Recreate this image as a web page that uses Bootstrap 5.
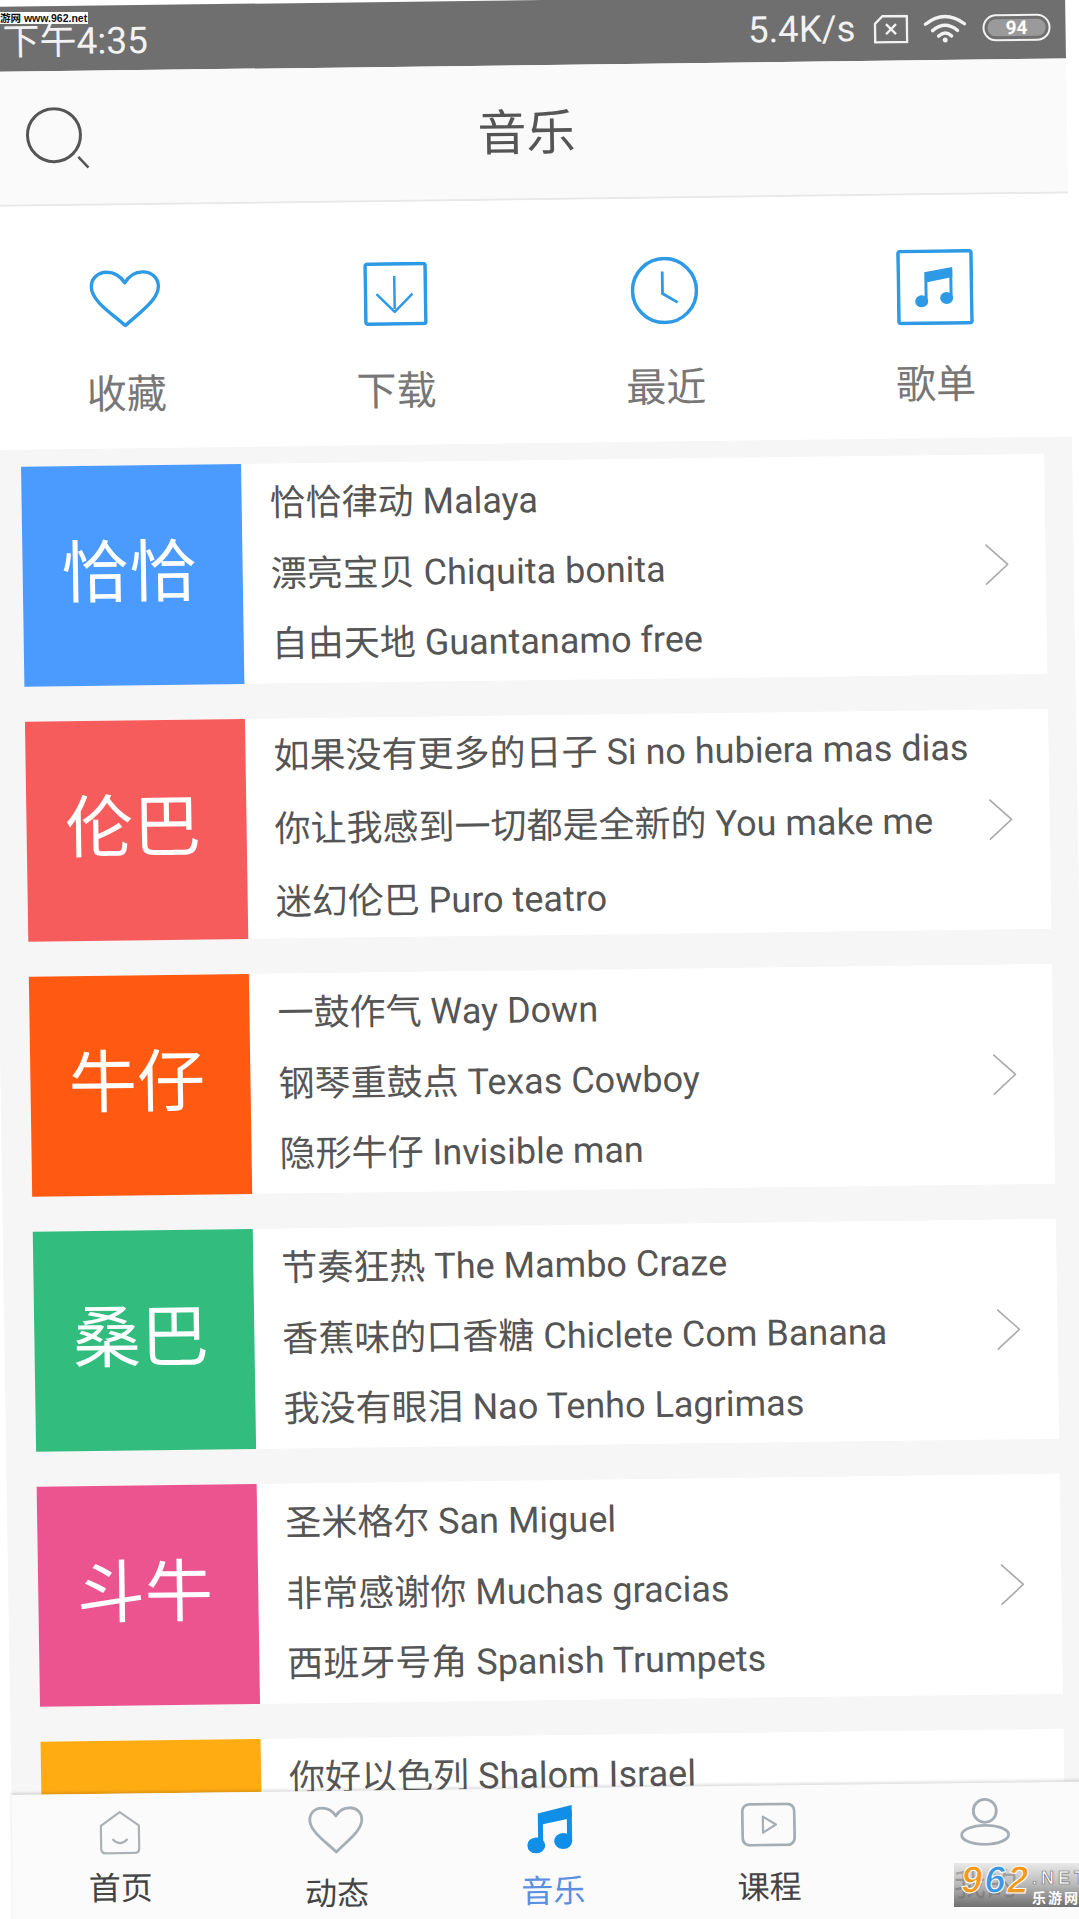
<!DOCTYPE html>
<html lang="zh">
<head>
  <meta charset="UTF-8" />
  <meta name="viewport" content="width=device-width, initial-scale=1.0"/>
  <title>音乐</title>
  <link href="https://cdn.jsdelivr.net/npm/bootstrap@5.3.3/dist/css/bootstrap.min.css" rel="stylesheet"/>
  <style>
    html, body { height: 100%; }
    body {
      margin: 0;
      background: #fff;
      overflow: hidden;
      font-family: Roboto, "Noto Sans CJK SC", sans-serif;
    }
    /* the photo is slightly crooked, so the whole phone screen is sheared */
    .screen {
      width: 1081px;
      height: 1930px;
      transform-origin: 0 0;
      transform: matrix(1, -0.0125, 0.0153, 1, -16, 7);
    }
    .status-bar {
      height: 65px;
      padding: 1px 15px 0 18px;
      background: #6f6f6f;
      color: #f2f2f2;
      flex: none;
    }
    .status-time { font-size: 37px; font-weight: 400; line-height: 1; padding-top: 4px; }
    .status-speed { font-size: 36.5px; font-weight: 400; line-height: 1; margin-right: 18px; }
    .status-sim { margin-right: 15px; }
    .status-wifi { margin-right: 16px; }
    .battery-pill {
      width: 68px;
      height: 27px;
      border: 2px solid #f2f2f2;
      border-radius: 14px;
      padding: 3px;
    }
    .battery-level {
      height: 100%;
      background: #9a9a9a;
      border-radius: 8px;
      color: #fff;
      font-size: 19px;
      font-weight: 700;
      line-height: 17px;
    }
    .top-nav {
      height: 135px;
      flex: none;
      padding: 0 40px;
      background: #fafafa;
      border-bottom: 2px solid #e8e8e8;
    }
    .nav-side { flex: 1 1 0; }
    .nav-title { font-size: 49px; color: #555; line-height: 1; padding-top: 3px; }
    .quick-row {
      flex: none;
      height: 243px;
      padding: 54px 0 0 2px;
      background: #fff;
    }
    .quick-cell { width: 270px; }
    .quick-icon { height: 76px; }
    .quick-label { margin-top: 34px; font-size: 40px; line-height: 52px; color: #777; }
    .song-list {
      min-height: 0;
      padding: 17px 28px 0 30px;
      background: #f6f6f6;
    }
    .genre-card {
      height: 220px;
      margin-bottom: 35px;
      background: #fff;
      flex: none;
    }
    .genre-tile {
      width: 220px;
      flex: none;
      padding: 0 7px 5px 0;
      color: #fff;
      font-size: 68px;
      font-weight: 400;
    }
    .genre-songs { padding-left: 28px; padding-top: 2px; }
    .song-line { font-size: 36px; line-height: 70.5px; color: #555; white-space: nowrap; }
    .song-line-wide { line-height: 73px; }
    .genre-more { margin-right: 37px; flex: none; }
    .tab-bar {
      flex: none;
      height: 142px;
      background: #fbfbfb;
      box-shadow: 0 -2px 3px rgba(0,0,0,.13);
      position: relative;
    }
    .tab-cell { width: 216.2px; }
    .tab-icon { height: 62px; margin-top: 8px; }
    .tab-icon-note { padding: 4px 4px 0 0; }
    .tab-label { font-size: 32px; line-height: 42px; margin-top: 4px; color: #444; }
    .tab-label-low { margin-top: 12px; }
    .tab-label-mid { margin-top: 11px; }
    .tab-label-on { color: #5b8fe0; }
    .mark-top {
      position: absolute;
      left: 0;
      top: 12px;
      width: 88px;
      height: 12px;
      background: #fff;
      color: #111;
      font: 700 10.5px/12px "Liberation Sans", "Noto Sans CJK SC", sans-serif;
      white-space: nowrap;
      overflow: hidden;
    }
    .mark-bottom {
      position: absolute;
      right: 0;
      top: 1863px;
      width: 125px;
      height: 44px;
      background: linear-gradient(180deg, rgba(225,225,225,.7) 0%, rgba(165,165,165,.78) 50%, #6f6f6f 100%);
      overflow: hidden;
      white-space: nowrap;
    }
    .mark-num {
      position: absolute;
      left: 7px;
      top: 0;
      font: italic 700 38px/34px "Liberation Sans", sans-serif;
      letter-spacing: 2px;
      -webkit-text-stroke: 1px #fff;
    }
    .mark-orange { color: #f39a1e; }
    .mark-blue { color: #3a97e0; }
    .mark-net {
      position: absolute;
      left: 78px;
      top: 5px;
      color: #fff;
      font: 700 18px/20px "Liberation Sans", sans-serif;
      letter-spacing: 4px;
      -webkit-text-stroke: .7px #777;
    }
    .mark-cn {
      position: absolute;
      left: 78px;
      top: 25px;
      color: #fff;
      font: 700 14px/18px "Noto Sans CJK SC", sans-serif;
      letter-spacing: 2px;
    }
  </style>
</head>
<body>

<div class="screen d-flex flex-column">

  <div class="status-bar d-flex align-items-center">
    <div class="status-time flex-grow-1">下午4:35</div>
    <div class="status-speed">5.4K/s</div>
    <svg class="status-sim" width="35" height="29" viewBox="0 0 35 29" fill="none" stroke="#f2f2f2" stroke-width="2.4">
      <path d="M9 1.5H33.5V27.5H1.5V9Z" stroke-linejoin="round"/>
      <path d="M12.5 9.5l10 10M22.5 9.5l-10 10"/>
    </svg>
    <svg class="status-wifi" width="43" height="29" viewBox="0 0 43 29" fill="none" stroke="#f2f2f2" stroke-width="3.4" stroke-linecap="round">
      <path d="M2 10Q21.500 -5 41 10"/>
      <path d="M9 16.500Q21.500 6 34 16.500"/>
      <path d="M15 22Q21.500 16 28 22"/>
      <circle cx="21.500" cy="26" r="2.500" fill="#f2f2f2" stroke="none"/>
    </svg>
    <div class="battery-pill"><div class="battery-level text-center">94</div></div>
  </div>

  <div class="top-nav d-flex align-items-center">
    <div class="nav-side">
      <svg class="d-block" width="63" height="62" viewBox="0 0 63 62" fill="none" stroke="#555">
        <circle cx="28" cy="28" r="26.500" stroke-width="3"/>
        <path d="M52 50L62 61" stroke-width="2.500"/>
      </svg>
    </div>
    <div class="nav-title">音乐</div>
    <div class="nav-side"></div>
  </div>

  <div class="quick-row d-flex">
    <div class="quick-cell text-center">
      <div class="quick-icon d-flex align-items-center justify-content-center">
        <svg class="mt-1" width="71" height="60" viewBox="0 0 73 60" fill="none" stroke="#2e9ae6" stroke-width="3.500" stroke-linejoin="round">
          <path d="M36.500 57C22 44 2 31 2 17C2 8 9 2 18 2C26 2 32 6 36.500 13C41 6 47 2 55 2C64 2 71 8 71 17C71 31 51 44 36.500 57Z"/>
        </svg>
      </div>
      <div class="quick-label">收藏</div>
    </div>
    <div class="quick-cell text-center">
      <div class="quick-icon d-flex align-items-center justify-content-center">
        <svg width="64" height="64" viewBox="0 0 64 64" fill="none" stroke="#2e9ae6">
          <rect x="2" y="2" width="60" height="60" rx="2" stroke-width="3.500"/>
          <path d="M31 14V47M13 32L31 50L49 32" stroke-width="2.500" stroke-linejoin="round"/>
        </svg>
      </div>
      <div class="quick-label">下载</div>
    </div>
    <div class="quick-cell text-center">
      <div class="quick-icon d-flex align-items-center justify-content-center">
        <svg width="68" height="68" viewBox="0 0 68 68" fill="none" stroke="#2e9ae6">
          <circle cx="34" cy="34" r="32" stroke-width="3.500"/>
          <path d="M32 15V37L47 46" stroke-width="2.800"/>
        </svg>
      </div>
      <div class="quick-label">最近</div>
    </div>
    <div class="quick-cell text-center">
      <div class="quick-icon d-flex align-items-center justify-content-center">
        <svg width="77" height="76" viewBox="0 0 77 76" fill="none" stroke="#2e9ae6">
          <rect x="2" y="2" width="73" height="72" rx="2" stroke-width="3.500"/>
          <g fill="#2e9ae6" stroke="none">
            <path d="M28 23L56 18V28L31 33V52H28Z"/>
            <path d="M53 20H56V49H53Z"/>
            <ellipse cx="25" cy="52" rx="6.500" ry="6"/>
            <ellipse cx="50" cy="49" rx="6.500" ry="6"/>
          </g>
        </svg>
      </div>
      <div class="quick-label">歌单</div>
    </div>
  </div>

  <div class="song-list flex-grow-1 overflow-hidden d-flex flex-column" id="songList"></div>

  <div class="tab-bar d-flex">
    <div class="tab-cell text-center">
      <div class="tab-icon d-flex align-items-center justify-content-center">
        <svg width="42" height="44" viewBox="0 0 42 44" fill="none" stroke="#acb1b5" stroke-width="2.200" stroke-linejoin="round">
          <path d="M21 1.500L40 15V38Q40 42.500 35 42.500H7Q2 42.500 2 38V15Z"/>
          <path d="M14 29Q21 36 28 29" stroke-linecap="round"/>
        </svg>
      </div>
      <div class="tab-label">首页</div>
    </div>
    <div class="tab-cell text-center">
      <div class="tab-icon d-flex align-items-center justify-content-center">
        <svg width="56" height="48" viewBox="0 0 56 48" fill="none" stroke="#a6aeb5" stroke-width="2.800" stroke-linejoin="round">
          <path d="M28 46C18 36 2 25 2 14C2 7 7 2 14 2C20 2 25 5 28 10C31 5 36 2 42 2C49 2 54 7 54 14C54 25 38 36 28 46Z"/>
        </svg>
      </div>
      <div class="tab-label tab-label-low">动态</div>
    </div>
    <div class="tab-cell text-center">
      <div class="tab-icon tab-icon-note d-flex align-items-center justify-content-center">
        <svg width="46" height="48" viewBox="0 0 46 48" fill="#0f8fe8">
          <path d="M11 8L45 0V13L16 19V41H11Z"/>
          <path d="M40 5H45V36H40Z"/>
          <ellipse cx="9" cy="40" rx="9" ry="8"/>
          <ellipse cx="36" cy="36" rx="9" ry="8"/>
        </svg>
      </div>
      <div class="tab-label tab-label-low tab-label-on">音乐</div>
    </div>
    <div class="tab-cell text-center">
      <div class="tab-icon d-flex align-items-center justify-content-center">
        <svg width="55" height="44" viewBox="0 0 55 44" fill="none" stroke="#a6aeb5" stroke-width="2.800" stroke-linejoin="round">
          <rect x="1.500" y="1.500" width="52" height="41" rx="7"/>
          <path d="M22 14L35 22L22 30Z" stroke-width="2.200"/>
        </svg>
      </div>
      <div class="tab-label tab-label-mid">课程</div>
    </div>
    <div class="tab-cell text-center">
      <div class="tab-icon d-flex align-items-center justify-content-center">
        <svg width="50" height="48" viewBox="0 0 50 48" fill="none" stroke="#a6aeb5" stroke-width="2.800">
          <circle cx="25" cy="13" r="11.500"/>
          <ellipse cx="25" cy="37" rx="23.500" ry="9.500"/>
        </svg>
      </div>
      <div class="tab-label tab-label-mid">我的</div>
    </div>
  </div>
</div>

<!-- site watermarks sit on top of the photo, not sheared with it -->
<div class="mark-top">游网 www.962.net</div>
<div class="mark-bottom">
  <div class="mark-num"><span class="mark-orange">9</span><span class="mark-blue">6</span><span class="mark-orange">2</span></div>
  <div class="mark-net">.NET</div>
  <div class="mark-cn">乐游网</div>
</div>

<script src="https://cdn.jsdelivr.net/npm/bootstrap@5.3.3/dist/js/bootstrap.bundle.min.js"></script>
<script>
  const genres = [
    { name: "恰恰", color: "#4a9bfd", songs: ["恰恰律动 Malaya", "漂亮宝贝 Chiquita bonita", "自由天地 Guantanamo free"] },
    { name: "伦巴", color: "#f65c5c", wide: true, songs: ["如果没有更多的日子 Si no hubiera mas dias", "你让我感到一切都是全新的 You make me", "迷幻伦巴 Puro teatro"] },
    { name: "牛仔", color: "#ff5912", songs: ["一鼓作气 Way Down", "钢琴重鼓点 Texas Cowboy", "隐形牛仔 Invisible man"] },
    { name: "桑巴", color: "#32bd7e", songs: ["节奏狂热 The Mambo Craze", "香蕉味的口香糖 Chiclete Com Banana", "我没有眼泪 Nao Tenho Lagrimas"] },
    { name: "斗牛", color: "#ec5490", songs: ["圣米格尔 San Miguel", "非常感谢你 Muchas gracias", "西班牙号角 Spanish Trumpets"] },
    { name: "", color: "#ffab12", songs: ["你好以色列 Shalom Israel", "", ""] }
  ];

  const list = document.getElementById("songList");
  genres.forEach(g => {
    const card = document.createElement("div");
    card.className = "genre-card d-flex align-items-stretch";
    card.innerHTML = `
      <div class="genre-tile d-flex align-items-center justify-content-center">${g.name}</div>
      <div class="genre-songs flex-grow-1 d-flex flex-column justify-content-center">
        ${g.songs.map(s => `<div class="song-line ${g.wide ? "song-line-wide" : ""}">${s || "&nbsp;"}</div>`).join("")}
      </div>
      <svg class="genre-more align-self-center" width="24" height="42" viewBox="0 0 24 42" fill="none" stroke="#aaa" stroke-width="1.600">
        <path d="M1 1L23 21L1 41"/>
      </svg>`;
    card.querySelector(".genre-tile").style.background = g.color;
    list.appendChild(card);
  });
</script>
</body>
</html>
